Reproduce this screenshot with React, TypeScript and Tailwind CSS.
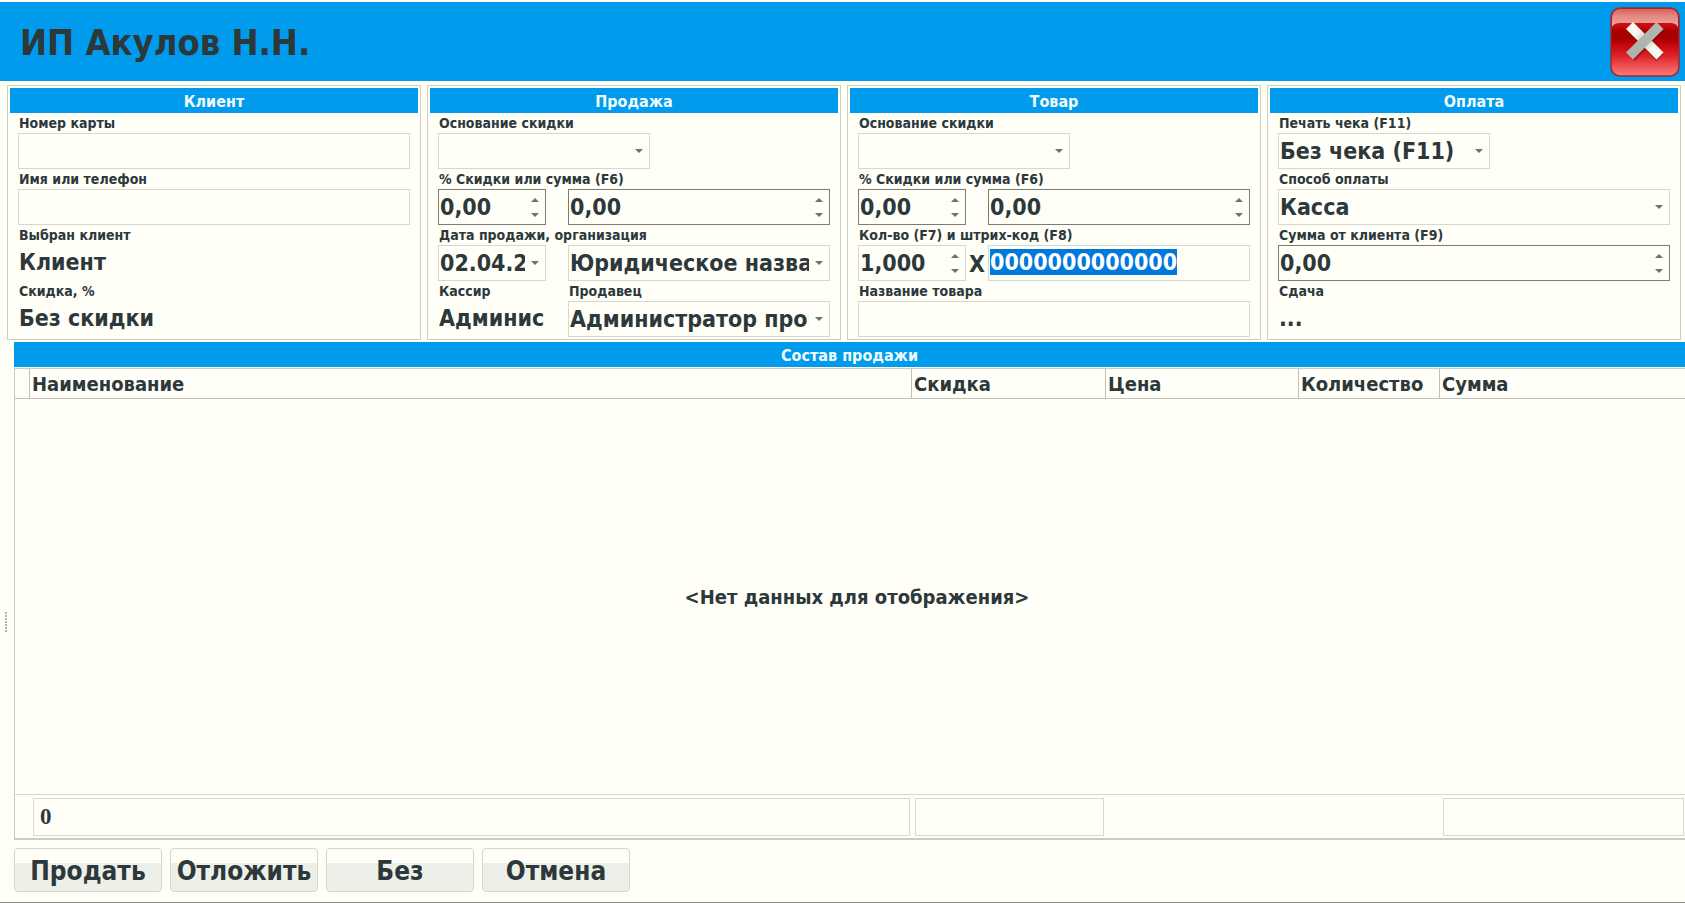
import { useId, type ReactNode } from "react";
import { clsx } from "clsx";

const COLUMNS = [
  { name: "Наименование", width: "", total: "0" },
  { name: "Скидка", width: "w-[194px]", total: "" },
  { name: "Цена", width: "w-[193px]", total: null },
  { name: "Количество", width: "w-[141px]", total: null },
  { name: "Сумма", width: "w-[246px]", total: "" },
];

const ACTIONS = ["Продать", "Отложить", "Без", "Отмена"];

function Arrow({ up }: { up?: boolean }) {
  return (
    <svg width="8" height="4" viewBox="0 0 8 4" className="block fill-[#6e7069]" aria-hidden="true">
      <path d={up ? "M0 4 4 0l4 4z" : "M0 0h8L4 4z"} />
    </svg>
  );
}

function Panel({ title, children }: { title: string; children: ReactNode }) {
  return (
    <section className="min-w-0 border border-[#cbcec3] p-[2px]">
      <h2 className="h-[25px] bg-[#009bec] text-center text-[16px] leading-7 text-[#f0fbff]">{title}</h2>
      <div className="px-2">{children}</div>
    </section>
  );
}

// Label on top, control below. `children` gets the id that ties them together.
function Field({ label, className, children }: { label: string; className?: string; children: (id: string) => ReactNode }) {
  const id = useId();
  return (
    <div className={clsx("min-w-0", className)}>
      <label htmlFor={id} className="block h-5 pl-px text-[14px] leading-5 whitespace-nowrap">
        {label}
      </label>
      {children(id)}
    </div>
  );
}

const box = "block h-9 w-full border border-[#d5d8ce] bg-transparent";

function TextBox({ id, value = "", selected }: { id: string; value?: string; selected?: boolean }) {
  return (
    <input
      id={id}
      defaultValue={value}
      autoFocus={selected}
      onFocus={(e) => selected && e.currentTarget.select()}
      className={clsx(box, "px-px pb-[2px] outline-none selection:bg-[#0078dc] selection:text-white")}
    />
  );
}

function Select({ id, value = "" }: { id: string; value?: string }) {
  return (
    <div className="relative">
      <select id={id} className={clsx(box, "appearance-none pr-5 pb-px pl-px outline-none")}>
        <option>{value}</option>
      </select>
      <span className="pointer-events-none absolute inset-y-0 right-[7px] flex items-center">
        <Arrow />
      </span>
    </div>
  );
}

function Spin({ id, value, light, label }: { id: string; value: string; light?: boolean; label?: string }) {
  return (
    <div className={clsx("flex h-9 border", light ? "border-[#d5d8ce]" : "border-[#7b7d75]")}>
      <input id={id} aria-label={label} defaultValue={value} className="min-w-0 flex-1 bg-transparent pb-px pl-px outline-none" />
      <div className="flex w-5 flex-col py-[2px]">
        <button aria-label="Больше" className="flex flex-1 items-center justify-center">
          <Arrow up />
        </button>
        <button aria-label="Меньше" className="flex flex-1 items-center justify-center">
          <Arrow />
        </button>
      </div>
    </div>
  );
}

function DateBox({ id, value }: { id: string; value: string }) {
  return (
    <div className="flex h-9 border border-[#d5d8ce]">
      <input id={id} defaultValue={value} className="min-w-0 flex-1 bg-transparent pb-px pl-px outline-none" />
      <button aria-label="Календарь" className="flex w-5 items-center justify-center">
        <Arrow />
      </button>
    </div>
  );
}

function Value({ id, children }: { id: string; children: ReactNode }) {
  return (
    <output id={id} className="block h-9 overflow-hidden pl-px leading-[34px] whitespace-nowrap">
      {children}
    </output>
  );
}

const pair = "grid grid-cols-[108px_minmax(0,1fr)] gap-x-[22px]";

function DiscountRow() {
  return (
    <Field label="% Скидки или сумма (F6)">
      {(id) => (
        <div className={pair}>
          <Spin id={id} value="0,00" />
          <Spin id={id + "sum"} label="Сумма скидки" value="0,00" />
        </div>
      )}
    </Field>
  );
}

function CloseIcon() {
  return (
    <svg viewBox="0 0 70 70" className="size-[70px]" aria-hidden="true">
      <defs>
        <linearGradient id="red" x1="0" y1="0" x2="0" y2="1">
          <stop offset="0" stopColor="#c8202a" />
          <stop offset=".26" stopColor="#cc0a10" />
          <stop offset=".34" stopColor="#a60000" />
          <stop offset=".46" stopColor="#a80000" />
          <stop offset=".54" stopColor="#c4060c" />
          <stop offset=".7" stopColor="#dc2228" />
          <stop offset=".85" stopColor="#ee5054" />
          <stop offset="1" stopColor="#fa7c7c" />
        </linearGradient>
        <linearGradient id="gloss" x1="0" y1="0" x2="0" y2="1">
          <stop offset="0" stopColor="#d9605a" />
          <stop offset=".4" stopColor="#e48a82" />
          <stop offset="1" stopColor="#eea8a0" />
        </linearGradient>
        <linearGradient id="barLight" x1="0" y1="0" x2="1" y2="1">
          <stop offset="0" stopColor="#fffff8" />
          <stop offset=".3" stopColor="#f4f5ee" />
          <stop offset=".5" stopColor="#c5c7bf" />
          <stop offset=".7" stopColor="#f4f5ee" />
          <stop offset="1" stopColor="#fffff8" />
        </linearGradient>
        <linearGradient id="barDark" x1="1" y1="0" x2="0" y2="1">
          <stop offset="0" stopColor="#b4b7af" />
          <stop offset="1" stopColor="#b0b3ab" />
        </linearGradient>
      </defs>
      <rect x="1" y="1" width="68" height="68" rx="9" fill="url(#red)" stroke="#9c2a34" strokeWidth="1.5" />
      <path d="M2 20V11Q2 2 11 2H59Q68 2 68 11V20Q66 16 60 16H10Q4 16 2 20Z" fill="url(#gloss)" />
      <g transform="translate(1 1.5)" stroke="#7c0a0e" strokeOpacity=".6" strokeWidth="10">
        <path d="M20 19 49 49M49 19 20 49" />
      </g>
      <path d="M16 22 23 15 53.500 45.500 46.500 52.500Z" fill="url(#barLight)" />
      <path d="M46.500 15 53.500 22 23 52.500 16 45.500Z" fill="url(#barDark)" />
    </svg>
  );
}

export default function App() {
  return (
    <main className="flex h-screen flex-col overflow-hidden border-b border-[#8f9186] bg-[#fffff8] font-['DejaVu_Sans_Condensed','DejaVu_Sans',sans-serif] text-[23px] leading-7 font-bold text-[#2d383b]">
      {/* Header */}
      <header className="mt-[2px] flex h-[79px] shrink-0 items-center justify-between bg-[#009bec] pr-[5px] pl-5">
        <h1 className="pt-[2px] text-[36px] leading-none">ИП Акулов Н.Н.</h1>
        <button aria-label="Закрыть">
          <CloseIcon />
        </button>
      </header>

      {/* Sale parameters */}
      <div className="mt-1 mr-1 ml-[7px] grid shrink-0 grid-cols-4 gap-x-[6px]">
        <Panel title="Клиент">
          <Field label="Номер карты">{(id) => <TextBox id={id} />}</Field>
          <Field label="Имя или телефон">{(id) => <TextBox id={id} />}</Field>
          <Field label="Выбран клиент">{(id) => <Value id={id}>Клиент</Value>}</Field>
          <Field label="Скидка, %">{(id) => <Value id={id}>Без скидки</Value>}</Field>
        </Panel>

        <Panel title="Продажа">
          <Field label="Основание скидки" className="w-[212px]">
            {(id) => <Select id={id} />}
          </Field>
          <DiscountRow />
          <Field label="Дата продажи, организация">
            {(id) => (
              <div className={pair}>
                <DateBox id={id} value="02.04.2024" />
                <Select id={id + "org"} value="Юридическое название" />
              </div>
            )}
          </Field>
          <div className={pair}>
            <Field label="Кассир">{(id) => <Value id={id}>Админис</Value>}</Field>
            <Field label="Продавец">{(id) => <Select id={id} value="Администратор программы" />}</Field>
          </div>
        </Panel>

        <Panel title="Товар">
          <Field label="Основание скидки" className="w-[212px]">
            {(id) => <Select id={id} />}
          </Field>
          <DiscountRow />
          <Field label="Кол-во (F7) и штрих-код (F8)">
            {(id) => (
              <div className="grid h-9 grid-cols-[108px_22px_minmax(0,1fr)]">
                <Spin id={id} value="1,000" light />
                <span className="text-center leading-[38px]">X</span>
                <TextBox id={id + "code"} value="0000000000000" selected />
              </div>
            )}
          </Field>
          <Field label="Название товара">{(id) => <TextBox id={id} />}</Field>
        </Panel>

        <Panel title="Оплата">
          <Field label="Печать чека (F11)" className="w-[212px]">
            {(id) => <Select id={id} value="Без чека (F11)" />}
          </Field>
          <Field label="Способ оплаты">{(id) => <Select id={id} value="Касса" />}</Field>
          <Field label="Сумма от клиента (F9)">{(id) => <Spin id={id} value="0,00" />}</Field>
          <Field label="Сдача">{(id) => <Value id={id}>...</Value>}</Field>
        </Panel>
      </div>

      <div className="mt-[2px] flex min-h-0 flex-1">
        {/* Splitter grip */}
        <div className="flex w-[14px] shrink-0 flex-col items-center justify-center gap-px pr-[2px]">
          {[0, 1, 2, 3, 4, 5, 6].map((i) => (
            <span key={i} className="h-[2px] w-[2px] bg-[#b4b6ad]" />
          ))}
        </div>

        <div className="flex min-w-0 flex-1 flex-col">
          <h2 className="h-[25px] shrink-0 bg-[#009bec] text-center text-[16px] leading-7 text-[#f0fbff]">
            Состав продажи
          </h2>

          {/* Sale items */}
          <div className="mt-px min-h-0 flex-1">
            <table className="h-full w-full table-fixed border-separate border-spacing-0 border-t border-b-2 border-l border-[#c9ccc2] text-left text-[20px]">
              <thead>
                <tr className="h-[30px]">
                  <th className="w-[14px] border-b border-[#bfc2b8] p-0" />
                  {COLUMNS.map((c) => (
                    <th key={c.name} className={clsx("border-b border-l border-[#bfc2b8] py-0 pr-0 pl-[2px]", c.width)}>
                      {c.name}
                    </th>
                  ))}
                </tr>
              </thead>
              <tbody>
                <tr>
                  <td />
                  <td colSpan={COLUMNS.length} className="text-center">
                    &lt;Нет данных для отображения&gt;
                  </td>
                </tr>
              </tbody>
              <tfoot>
                <tr className="h-11">
                  <td className="border-t border-[#d5d8ce]" />
                  {COLUMNS.map((c) => (
                    <td key={c.name} className="border-t border-[#d5d8ce] py-0 pr-px pl-1">
                      {c.total !== null && (
                        <input
                          readOnly
                          aria-label={`Итого: ${c.name}`}
                          defaultValue={c.total}
                          className="block h-[38px] w-full border border-[#d9dbd2] bg-transparent pl-[6px] font-['Liberation_Serif',serif] text-[23px] outline-none"
                        />
                      )}
                    </td>
                  ))}
                </tr>
              </tfoot>
            </table>
          </div>

          {/* Actions */}
          <div className="flex shrink-0 gap-2 pt-2 pb-[10px]">
            {ACTIONS.map((name) => (
              <button
                key={name}
                className="h-11 w-[148px] rounded border border-[#d3d8cd] bg-linear-to-b from-[#fffff8] from-33% to-[#edf0e8] to-33% pt-[2px] text-[26px]"
              >
                {name}
              </button>
            ))}
          </div>
        </div>
      </div>
    </main>
  );
}
